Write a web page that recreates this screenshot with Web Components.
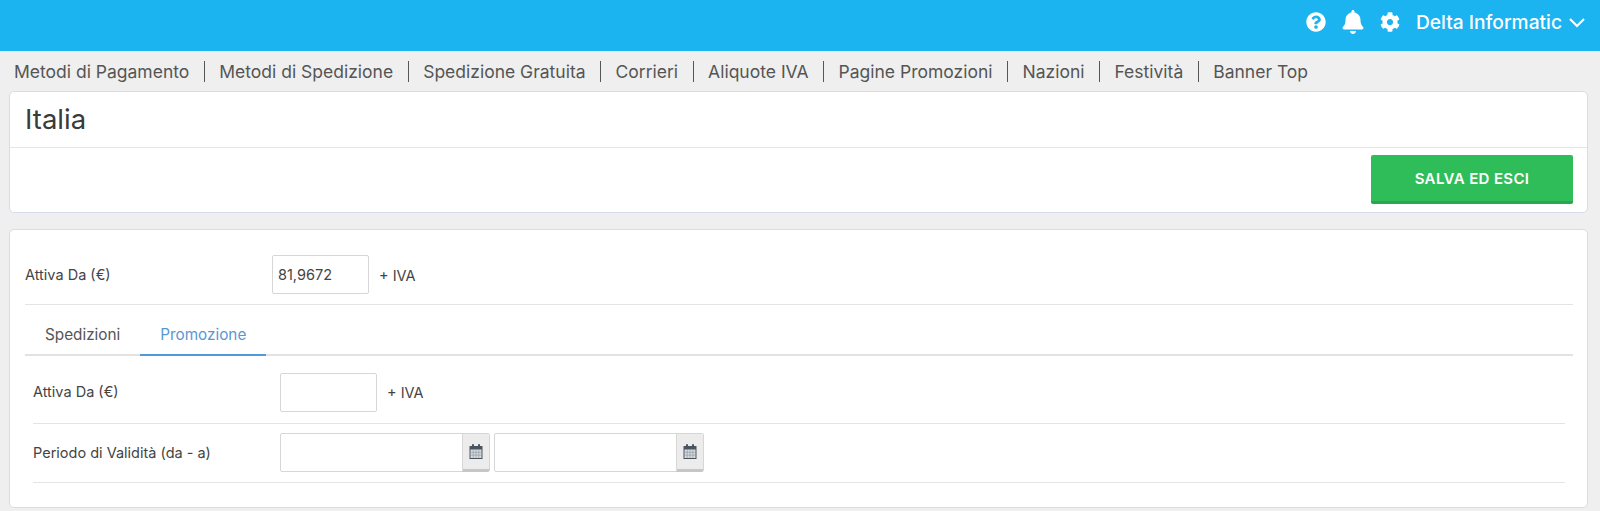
<!DOCTYPE html>
<html>
<head>
<meta charset="utf-8">
<title>Italia</title>
<style>
  html, body { margin: 0; padding: 0; height: 511px; overflow: hidden; }
  body { background: #efefef; font-family: Inter, "Liberation Sans", sans-serif; color: #444; }
</style>
</head>
<body>
<top-bar name="Delta Informatic"></top-bar>
<sub-nav items="Metodi di Pagamento|Metodi di Spedizione|Spedizione Gratuita|Corrieri|Aliquote IVA|Pagine Promozioni|Nazioni|Festività|Banner Top"></sub-nav>
<title-card heading="Italia" action="SALVA ED ESCI"></title-card>
<form-card>
  <form-row label="Attiva Da (€)" height="60">
    <text-box value="81,9672"></text-box><span slot="after">+ IVA</span>
  </form-row>
  <tab-strip items="Spedizioni|Promozione" active="1"></tab-strip>
  <form-row label="Attiva Da (€)" inner height="62">
    <text-box></text-box><span slot="after">+ IVA</span>
  </form-row>
  <form-row label="Periodo di Validità (da - a)" inner dates height="59">
    <date-box></date-box><date-box></date-box>
  </form-row>
</form-card>

<script>
class TopBar extends HTMLElement {
  constructor() {
    super();
    this.shadowDOM = this.attachShadow({mode: 'open'});
  }

  connectedCallback() {
    this.shadowDOM.innerHTML = `
      <style>
        :host {
          display: flex;
          align-items: center;
          justify-content: flex-end;
          height: 51px;
          padding: 0 15px 7px 0;
          box-sizing: border-box;
          background: #1bb3f0;
          color: #fff;
          font-size: 19.2px;
          font-weight: 500;
        }
        svg { display: block; fill: #fff; }
        .help { margin-right: 16px; }
        .bell { margin-right: 16px; margin-top: -1px; }
        .cog { margin-right: 16px; }
        .chev { margin-left: 7px; fill: none; stroke: #fff; stroke-width: 2.2; }
      </style>
      <svg class="help" width="20" height="20" viewBox="0 0 512 512"><path d="M504 256c0 136.997-111.043 248-248 248S8 392.997 8 256C8 119.083 119.043 8 256 8s248 111.083 248 248zM262.655 90c-54.497 0-89.255 22.957-116.549 63.758-3.536 5.286-2.353 12.415 2.715 16.258l34.699 26.31c5.205 3.947 12.621 3.008 16.665-2.122 17.864-22.658 30.113-35.797 57.303-35.797 20.429 0 45.698 13.148 45.698 32.958 0 14.976-12.363 22.667-32.534 33.976C247.128 238.528 216 254.941 216 296v4c0 6.627 5.373 12 12 12h56c6.627 0 12-5.373 12-12v-1.333c0-28.462 83.186-29.647 83.186-106.667 0-58.002-60.165-102-116.531-102zM256 338c-25.365 0-46 20.635-46 46 0 25.364 20.635 46 46 46s46-20.636 46-46c0-25.365-20.635-46-46-46z"/></svg>
      <svg class="bell" width="22" height="24" viewBox="0 0 448 512"><path d="M224 512c35.32 0 63.97-28.65 63.97-64H160.03c0 35.35 28.65 64 63.97 64zm215.39-149.71c-19.32-20.76-55.47-51.99-55.47-154.29 0-77.7-54.48-139.9-127.94-155.16V32c0-17.67-14.32-32-31.98-32s-31.98 14.33-31.98 32v20.84C118.56 68.1 64.08 130.3 64.08 208c0 102.3-36.15 133.53-55.47 154.29-6 6.45-8.66 14.16-8.61 21.71.11 16.4 12.98 32 32.1 32h383.8c19.12 0 32-15.6 32.1-32 .05-7.55-2.61-15.27-8.61-21.71z"/></svg>
      <svg class="cog" width="20" height="20" viewBox="0 0 512 512"><path d="M487.4 315.7l-42.6-24.6c4.3-23.2 4.3-47 0-70.2l42.6-24.6c4.9-2.8 7.1-8.6 5.5-14-11.1-35.6-30-67.8-54.7-94.6-3.8-4.1-10-5.1-14.8-2.3L380.8 110c-17.9-15.4-38.5-27.3-60.8-35.1V25.8c0-5.6-3.9-10.5-9.4-11.7-36.7-8.2-74.3-7.8-109.2 0-5.5 1.2-9.4 6.1-9.4 11.7V75c-22.2 7.9-42.8 19.8-60.8 35.1L88.7 85.5c-4.9-2.8-11-1.9-14.8 2.3-24.7 26.7-43.6 58.9-54.7 94.6-1.7 5.4.6 11.2 5.5 14L67.3 221c-4.3 23.2-4.3 47 0 70.2l-42.6 24.6c-4.9 2.8-7.1 8.6-5.5 14 11.1 35.6 30 67.8 54.7 94.6 3.8 4.1 10 5.1 14.8 2.3l42.6-24.6c17.9 15.4 38.5 27.3 60.8 35.1v49.2c0 5.6 3.9 10.5 9.4 11.7 36.7 8.2 74.3 7.8 109.2 0 5.5-1.2 9.4-6.1 9.4-11.7v-49.2c22.2-7.9 42.8-19.8 60.8-35.1l42.6 24.6c4.9 2.8 11 1.9 14.8-2.3 24.7-26.7 43.6-58.9 54.7-94.6 1.5-5.5-.7-11.3-5.6-14.1zM256 336c-44.1 0-80-35.9-80-80s35.9-80 80-80 80 35.9 80 80-35.9 80-80 80z"/></svg>
      <span>${this.getAttribute('name')}</span>
      <svg class="chev" width="16" height="11" viewBox="0 0 16 11"><path d="M1 2l7 7 7-7"/></svg>
    `;
  }
}

class SubNav extends HTMLElement {
  constructor() {
    super();
    this.shadowDOM = this.attachShadow({mode: 'open'});
  }

  connectedCallback() {
    const links = this.getAttribute('items').split('|').map((t) => `<a>${t}</a>`).join('');
    this.shadowDOM.innerHTML = `
      <style>
        :host {
          display: flex;
          align-items: center;
          height: 40px;
          box-sizing: border-box;
          padding: 1px 0 0 14px;
          font-size: 17.5px;
          color: #555;
        }
        a {
          line-height: 21px;
          padding-right: 14.5px;
          margin-right: 14.5px;
          border-right: 1px solid #555;
        }
        a:last-child { border-right: 0; }
      </style>
      ${links}
    `;
  }
}

class TitleCard extends HTMLElement {
  constructor() {
    super();
    this.shadowDOM = this.attachShadow({mode: 'open'});
  }

  connectedCallback() {
    this.shadowDOM.innerHTML = `
      <style>
        :host {
          display: block;
          margin: 0 12px 16px 9px;
          height: 122px;
          box-sizing: border-box;
          background: #fff;
          border: 1px solid #d5dcea;
          border-radius: 5px;
        }
        h1 {
          margin: 0;
          height: 56px;
          box-sizing: border-box;
          padding: 10px 15px 0;
          font-size: 27.5px;
          line-height: 35px;
          font-weight: 400;
          color: #3a3a3a;
          border-bottom: 1px solid #e6e6e6;
        }
        .bar { display: flex; justify-content: flex-end; padding: 7px 14px 0 0; }
        button {
          width: 202px;
          height: 49px;
          border: 0;
          border-bottom: 3px solid #2aa64f;
          border-radius: 2px;
          background: #2fbd59;
          color: #fff;
          font: 600 15px Inter, "Liberation Sans", sans-serif;
          letter-spacing: 0.35px;
        }
      </style>
      <h1>${this.getAttribute('heading')}</h1>
      <div class="bar"><button>${this.getAttribute('action')}</button></div>
    `;
  }
}

class FormCard extends HTMLElement {
  constructor() {
    super();
    this.attachShadow({mode: 'open'}).innerHTML = `
      <style>
        :host {
          display: block;
          margin: 0 12px 0 9px;
          height: 279px;
          box-sizing: border-box;
          padding: 15px 14px 0 15px;
          background: #fff;
          border: 1px solid #d5dcea;
          border-radius: 5px;
        }
      </style>
      <slot></slot>
    `;
  }
}

class FormRow extends HTMLElement {
  constructor() {
    super();
    this.shadowDOM = this.attachShadow({mode: 'open'});
  }

  connectedCallback() {
    const inner = this.hasAttribute('inner');
    const dates = this.hasAttribute('dates');
    this.shadowDOM.innerHTML = `
      <style>
        :host {
          display: flex;
          align-items: center;
          box-sizing: border-box;
          font-size: 14.5px;
          color: #444;
          height: ${this.getAttribute('height')}px;
          padding-bottom: ${dates ? '2px' : '0'};
          margin: 0 ${inner ? '8px' : '0'};
          border-bottom: 1px solid #e4e4e4;
        }
        .label { width: 247px; flex: none; margin-bottom: ${inner && !dates ? '2px' : '0'}; }
        .field { display: flex; gap: 4px; align-items: center; }
        .after { margin-left: 10px; padding-top: ${inner ? '0' : '1px'}; }
      </style>
      <div class="label">${this.getAttribute('label')}</div>
      <div class="field"><slot></slot></div>
      <div class="after"><slot name="after"></slot></div>
    `;
  }
}

class TextBox extends HTMLElement {
  constructor() {
    super();
    this.shadowDOM = this.attachShadow({mode: 'open'});
  }

  connectedCallback() {
    this.shadowDOM.innerHTML = `
      <style>
        :host {
          display: flex;
          align-items: center;
          width: 97px;
          height: 39px;
          box-sizing: border-box;
          padding-left: 5px;
          background: #fff;
          border: 1px solid #d6d6d6;
          border-radius: 2px;
          font-size: 14.5px;
          color: #444;
        }
      </style>
      <span>${this.getAttribute('value') || ''}</span>
    `;
  }
}

class DateBox extends HTMLElement {
  constructor() {
    super();
    this.attachShadow({mode: 'open'}).innerHTML = `
      <style>
        :host {
          display: flex;
          width: 210px;
          height: 39px;
          box-sizing: border-box;
          background: #fff;
          border: 1px solid #d6d6d6;
          border-radius: 2px;
        }
        .text { flex: 1; }
        .btn {
          width: 26px;
          display: flex;
          align-items: center;
          justify-content: center;
          background: #ececec;
          border-left: 1px solid #d8d8d8;
          border-bottom: 3px solid #c6c6c6;
          margin-bottom: -1px;
          border-radius: 0 2px 2px 0;
        }
        svg { display: block; }
      </style>
      <div class="text"></div>
      <div class="btn">
        <svg width="14" height="15" viewBox="0 0 14 15">
          <path d="M0.5 2h13v13h-13z" fill="#4a545e"/>
          <rect x="3" y="0" width="2" height="3.5" rx="1" fill="#4a545e"/>
          <rect x="9" y="0" width="2" height="3.5" rx="1" fill="#4a545e"/>
          <rect x="1.5" y="5.5" width="11" height="8.5" fill="#d8dcdf"/>
          <path d="M1.5 8.3h11M1.5 11.1h11M4.2 5.5V14M7 5.5V14M9.8 5.5V14" stroke="#8a929a" stroke-width=".6" fill="none"/>
        </svg>
      </div>
    `;
  }
}

class TabStrip extends HTMLElement {
  constructor() {
    super();
    this.shadowDOM = this.attachShadow({mode: 'open'});
  }

  connectedCallback() {
    const active = Number(this.getAttribute('active'));
    const tabs = this.getAttribute('items').split('|')
        .map((t, i) => `<a class="${i === active ? 'on' : ''}">${t}</a>`).join('');
    this.shadowDOM.innerHTML = `
      <style>
        :host {
          display: flex;
          height: 51px;
          margin-bottom: 6px;
          box-sizing: border-box;
          border-bottom: 2px solid #e2e2e2;
          font-size: 15.3px;
          color: #555;
        }
        a {
          display: block;
          box-sizing: border-box;
          height: 51px;
          padding: 0 20px;
          line-height: 60px;
          border-bottom: 2px solid transparent;
        }
        a.on { color: #5a97d2; border-bottom-color: #4f9ad8; }
      </style>
      ${tabs}
    `;
  }
}

customElements.define('top-bar', TopBar);
customElements.define('sub-nav', SubNav);
customElements.define('title-card', TitleCard);
customElements.define('form-card', FormCard);
customElements.define('form-row', FormRow);
customElements.define('text-box', TextBox);
customElements.define('date-box', DateBox);
customElements.define('tab-strip', TabStrip);
</script>
</body>
</html>
